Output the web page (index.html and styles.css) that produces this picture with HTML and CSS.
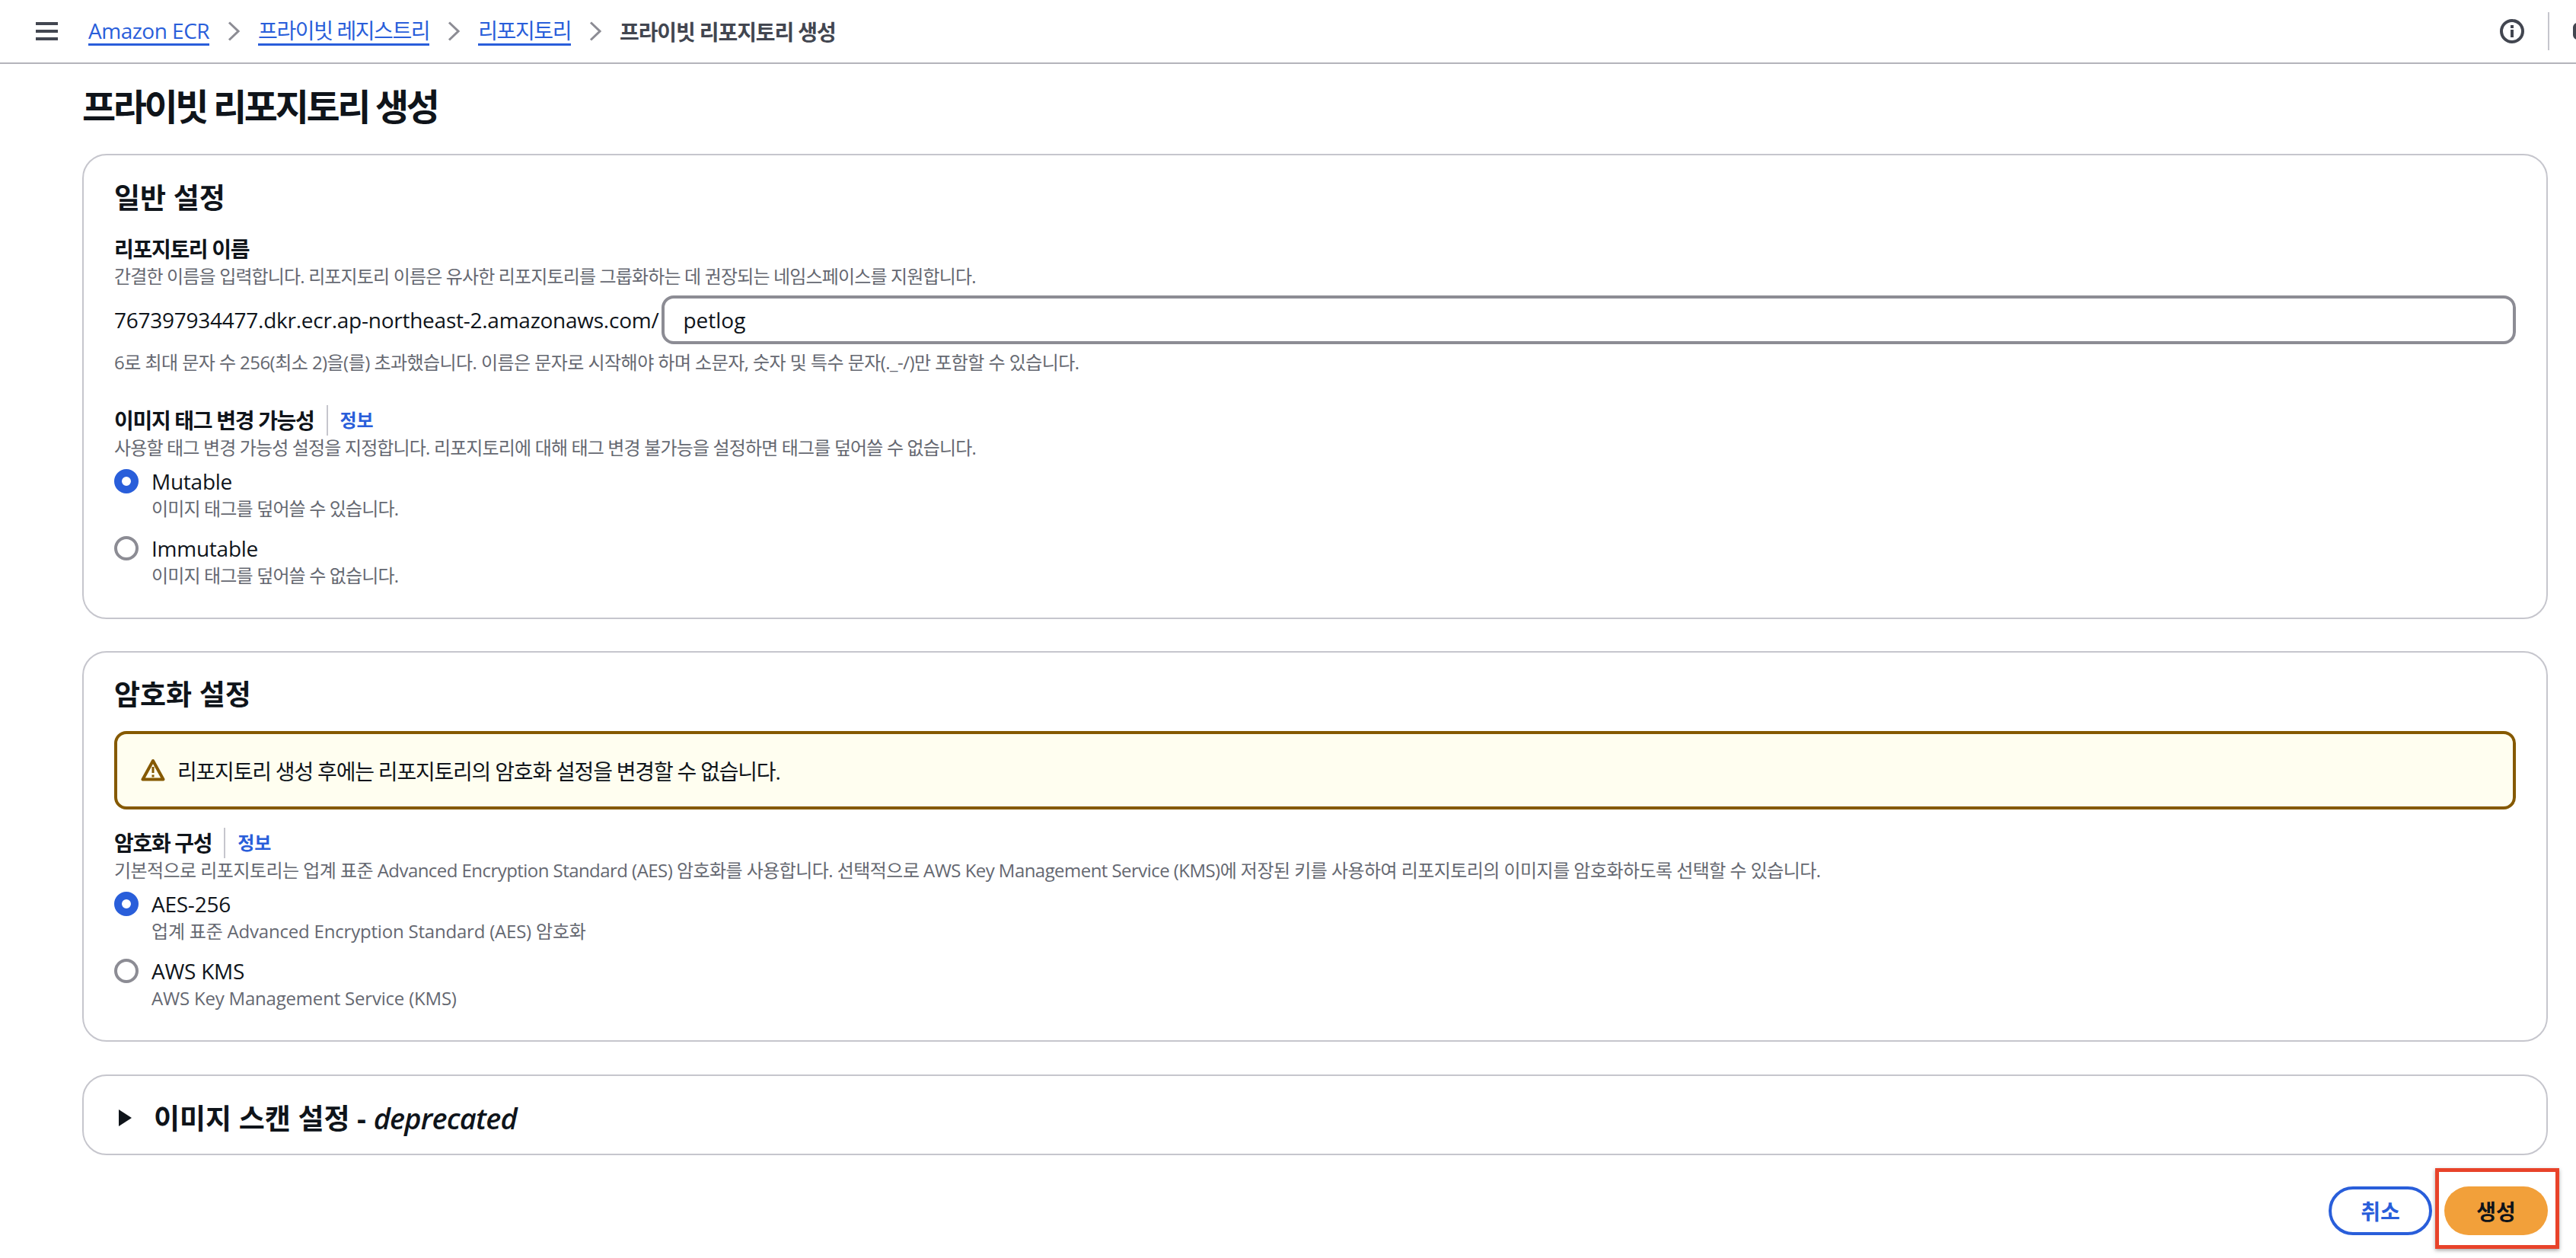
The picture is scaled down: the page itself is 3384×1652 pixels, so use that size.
FILE: index.html
```html
<!DOCTYPE html>
<html lang="ko">
<head>
    <meta charset="UTF-8">
    <title>프라이빗 리포지토리 생성</title>
    <link rel="stylesheet" href="styles.css">
</head>
<body>
    <header class="topbar">
        <div class="menu-btn"><span></span><span></span><span></span></div>
        <nav class="crumbs">
            <a href="#">Amazon ECR</a>
            <svg class="chev" viewBox="0 0 16 26"><path d="M2 1.500L14 13L2 24.500" /></svg>
            <a href="#" class="crumb-ko">프라이빗 레지스트리</a>
            <svg class="chev" viewBox="0 0 16 26"><path d="M2 1.500L14 13L2 24.500" /></svg>
            <a href="#" class="crumb-ko">리포지토리</a>
            <svg class="chev" viewBox="0 0 16 26"><path d="M2 1.500L14 13L2 24.500" /></svg>
            <span class="crumb-now">프라이빗 리포지토리 생성</span>
        </nav>
        <svg class="info-icon" viewBox="0 0 32 32">
            <circle cx="16" cy="16" r="14" />
            <rect class="solid" x="14" y="14" width="4" height="10" />
            <rect class="solid" x="14" y="8" width="4" height="4" />
        </svg>
        <div class="tool-sep"></div>
        <div class="tool-clip"></div>
    </header>

    <main class="page">
        <h1>프라이빗 리포지토리 생성</h1>

        <section class="card card-general">
            <h2>일반 설정</h2>
            <div class="label label-name">리포지토리 이름</div>
            <div class="desc">간결한 이름을 입력합니다. 리포지토리 이름은 유사한 리포지토리를 그룹화하는 데 권장되는 네임스페이스를 지원합니다.</div>
            <div class="repo-row">
                <span class="repo-prefix">767397934477.dkr.ecr.ap-northeast-2.amazonaws.com/</span>
                <div class="repo-input">petlog</div>
            </div>
            <div class="desc desc-mixed hint">6로 최대 문자 수 256(최소 2)을(를) 초과했습니다. 이름은 문자로 시작해야 하며 소문자, 숫자 및 특수 문자(._-/)만 포함할 수 있습니다.</div>

            <div class="label-row tag-row">
                <span class="label">이미지 태그 변경 가능성</span>
                <a class="info-link" href="#">정보</a>
            </div>
            <div class="desc">사용할 태그 변경 가능성 설정을 지정합니다. 리포지토리에 대해 태그 변경 불가능을 설정하면 태그를 덮어쓸 수 없습니다.</div>
            <div class="radios">
                <div class="radio-item">
                    <span class="radio checked"></span>
                    <div>
                        <div class="radio-label">Mutable</div>
                        <div class="desc radio-sub">이미지 태그를 덮어쓸 수 있습니다.</div>
                    </div>
                </div>
                <div class="radio-item">
                    <span class="radio"></span>
                    <div>
                        <div class="radio-label">Immutable</div>
                        <div class="desc radio-sub">이미지 태그를 덮어쓸 수 없습니다.</div>
                    </div>
                </div>
            </div>
        </section>

        <section class="card card-crypto">
            <h2>암호화 설정</h2>
            <div class="alert">
                <svg class="warn-icon" viewBox="0 0 32 32">
                    <path d="M16 3L2.500 27.500H29.500Z" />
                    <rect class="solid" x="14.500" y="11" width="3" height="8" />
                    <rect class="solid" x="14.500" y="21.500" width="3" height="3" />
                </svg>
                <span class="alert-text">리포지토리 생성 후에는 리포지토리의 암호화 설정을 변경할 수 없습니다.</span>
            </div>
            <div class="label-row crypto-row">
                <span class="label">암호화 구성</span>
                <a class="info-link" href="#">정보</a>
            </div>
            <div class="desc desc-mixed">기본적으로 리포지토리는 업계 표준 Advanced Encryption Standard (AES) 암호화를 사용합니다. 선택적으로 AWS Key Management Service (KMS)에 저장된 키를 사용하여 리포지토리의 이미지를 암호화하도록 선택할 수 있습니다.</div>
            <div class="radios">
                <div class="radio-item">
                    <span class="radio checked"></span>
                    <div>
                        <div class="radio-label">AES-256</div>
                        <div class="desc desc-latin radio-sub">업계 표준 Advanced Encryption Standard (AES) 암호화</div>
                    </div>
                </div>
                <div class="radio-item">
                    <span class="radio"></span>
                    <div>
                        <div class="radio-label">AWS KMS</div>
                        <div class="desc desc-latin radio-sub">AWS Key Management Service (KMS)</div>
                    </div>
                </div>
            </div>
        </section>

        <section class="card card-scan">
            <svg class="caret" viewBox="0 0 19 24"><path d="M1 1L18 12L1 23Z" /></svg>
            <h2>이미지 스캔 설정 - <em>deprecated</em></h2>
        </section>

        <div class="actions">
            <button class="btn btn-cancel">취소</button>
            <button class="btn btn-create">생성</button>
        </div>
    </main>

    <div class="highlight"></div>
</body>
</html>
```

FILE: styles.css
```css
* {
    box-sizing: border-box;
}

html, body {
    height: 100%;
}

body {
    margin: 0;
    overflow: hidden;
    position: relative;
    background-color: #fff;
    color: #0f141a;
    font-family: "Open Sans", "Noto Sans CJK KR", sans-serif;
    font-size: 28px;
}

a {
    color: #295eda;
}

.solid {
    fill: #424650;
    stroke: none;
}

/* top bar */
.topbar {
    height: 84px;
    display: flex;
    align-items: center;
    padding-left: 47px;
    border-bottom: 2px solid #b4b4bb;
    overflow: hidden;
}

.menu-btn {
    width: 29px;
    height: 24px;
    display: flex;
    flex-direction: column;
    justify-content: space-between;
    margin-right: 40px;
}

.menu-btn span {
    height: 4px;
    background-color: #424650;
}

.crumbs {
    display: flex;
    align-items: center;
    flex-grow: 1;
    font-size: 28px;
    letter-spacing: -0.5px;
}

.crumbs a {
    text-decoration: none;
    border-bottom: 3px solid #295eda;
    line-height: 34px;
}

.crumbs .crumb-ko {
    letter-spacing: -1.4px;
}

.chev {
    width: 16px;
    height: 26px;
    margin: 0 24px;
    fill: none;
    stroke: #8c8c94;
    stroke-width: 3;
}

.crumb-now {
    font-weight: 700;
    color: #424650;
    letter-spacing: -1.1px;
}

.info-icon {
    width: 32px;
    height: 32px;
    fill: none;
    stroke: #424650;
    stroke-width: 4;
}

.tool-sep {
    width: 2px;
    height: 50px;
    margin-left: 31px;
    background-color: #c6c6cd;
}

.tool-clip {
    width: 36px;
    height: 22px;
    margin-left: 31px;
    margin-right: -32px;
    flex-shrink: 0;
    border: 4px solid #424650;
    border-radius: 6px;
}

/* page */
.page {
    padding: 26px 37px 0 108px;
}

h1 {
    margin: 0 0 32px;
    font-size: 48px;
    line-height: 60px;
    font-weight: 700;
    letter-spacing: -3.4px;
}

h2 {
    margin: 0;
    font-size: 37px;
    line-height: 44px;
    font-weight: 700;
}

h2 em {
    font-size: 38px;
    font-weight: 600;
    letter-spacing: -0.8px;
}

.card {
    border: 2px solid #c6c6cd;
    border-radius: 32px;
    padding: 34px 40px 39px;
    margin-bottom: 42px;
}

.card-crypto {
    padding-top: 33px;
    padding-bottom: 39px;
    margin-bottom: 43px;
}

.card-scan {
    height: 106px;
    padding: 8px 45px 0;
    display: flex;
    align-items: center;
    margin-bottom: 41px;
}

.caret {
    width: 19px;
    height: 24px;
    margin-right: 28px;
    fill: #0f141a;
}

.label {
    font-weight: 700;
    line-height: 36px;
    letter-spacing: -1.3px;
}

.label-name {
    margin-top: 27px;
}

.desc {
    font-size: 24px;
    line-height: 32px;
    color: #656871;
    white-space: nowrap;
    letter-spacing: -0.85px;
}

.desc-mixed {
    letter-spacing: -0.55px;
}

.desc-latin {
    letter-spacing: -0.2px;
}

.label-name + .desc {
    margin-top: 2px;
}

.repo-row {
    display: flex;
    align-items: center;
    margin-top: 9px;
}

.repo-prefix {
    margin-right: 4px;
    letter-spacing: -0.25px;
}

.repo-input {
    flex-grow: 1;
    height: 64px;
    line-height: 56px;
    padding-left: 24px;
    border: 4px solid #8c8c94;
    border-radius: 16px;
}

.hint {
    margin-top: 8px;
}

.label-row {
    display: flex;
    align-items: center;
    height: 40px;
}

.tag-row {
    margin-top: 40px;
}

.crypto-row {
    margin-top: 24px;
}

.info-link {
    font-size: 24px;
    font-weight: 700;
    line-height: 40px;
    text-decoration: none;
    margin-left: 16px;
    padding-left: 16px;
    border-left: 2px solid #c6c6cd;
}

.radios {
    display: flex;
    flex-direction: column;
    gap: 20px;
    margin-top: 12px;
}

.radio-item {
    display: flex;
    gap: 17px;
}

.radio {
    width: 32px;
    height: 32px;
    flex-shrink: 0;
    border: 4px solid #8c8c94;
    border-radius: 50%;
    background-color: #fff;
}

.radio.checked {
    border: 10px solid #295eda;
}

.radio-label {
    line-height: 32px;
    letter-spacing: -0.25px;
}

.radio-sub {
    margin-top: 4px;
}

.alert {
    display: flex;
    align-items: center;
    height: 103px;
    margin-top: 26px;
    padding-left: 31px;
    background-color: #fffef0;
    border: 4px solid #855900;
    border-radius: 16px;
}

.alert-text {
    letter-spacing: -1.2px;
}

.warn-icon {
    width: 32px;
    height: 32px;
    margin-right: 16px;
    fill: none;
    stroke: #855900;
    stroke-width: 4;
    stroke-linejoin: round;
}

.warn-icon .solid {
    fill: #855900;
}

.actions {
    display: flex;
    justify-content: flex-end;
    gap: 16px;
}

.btn {
    width: 136px;
    height: 64px;
    padding: 0;
    border-radius: 32px;
    font-family: inherit;
    font-size: 28px;
    font-weight: 700;
    cursor: pointer;
}

.btn-cancel {
    background-color: #fff;
    color: #295eda;
    border: 4px solid #295eda;
}

.btn-create {
    background-color: #f2a03a;
    color: #0f141a;
    border: none;
}

/* red marker drawn over the screenshot */
.highlight {
    position: absolute;
    left: 3199px;
    top: 1534px;
    width: 163px;
    height: 106px;
    border: 5px solid #e8432a;
    box-shadow: 0 2px 5px rgba(0, 0, 0, 0.35);
}
```
